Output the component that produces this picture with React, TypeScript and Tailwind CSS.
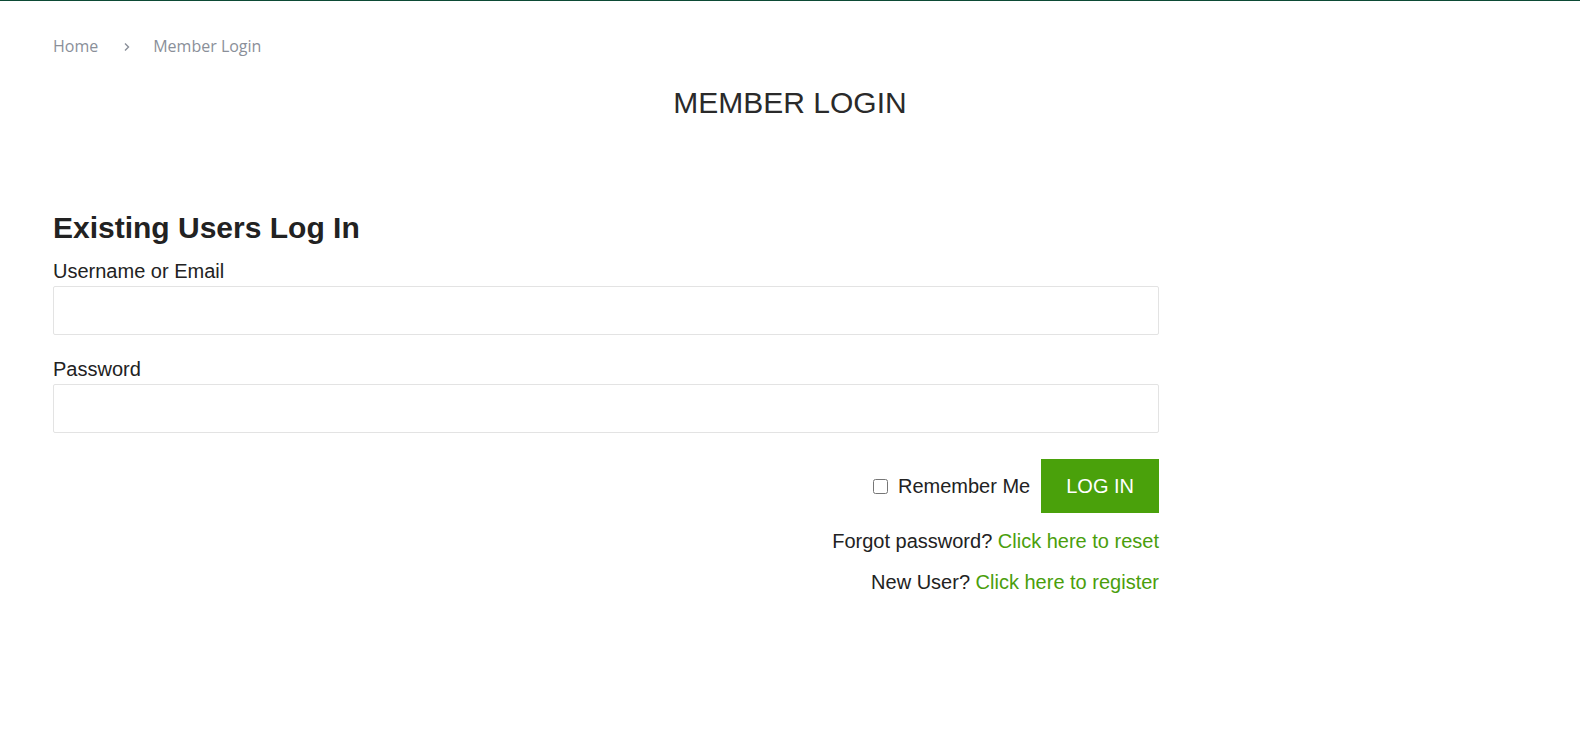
import { useState } from "react";

const ARIAL = "font-['Arial','Liberation_Sans',sans-serif]";

function Breadcrumb() {
  return (
    <nav className="flex items-center pl-[53px] pt-[33px] font-['Open_Sans',sans-serif] text-[16px] leading-6 text-[#8a8f99]">
      <a href="#" className="hover:text-[#4aa00b]">
        Home
      </a>
      {/* small chevron separator */}
      <svg
        aria-hidden
        width="8"
        height="10"
        viewBox="0 0 8 10"
        className="ml-[25px] mr-[22px] mt-[1px]"
        fill="none"
        stroke="currentColor"
        strokeWidth="1.4"
      >
        <path d="M2 1.5 5.5 5 2 8.5" />
      </svg>
      <span>Member Login</span>
    </nav>
  );
}

function Field({ label, type }: { label: string; type: string }) {
  return (
    <label className="block">
      <span className="block text-[20px] leading-6 text-[#222]">{label}</span>
      <input
        type={type}
        className="mt-[3px] block h-[49px] w-full rounded-[2px] border border-[#e3e3e3] bg-white px-3 text-[18px] outline-none focus:border-[#4aa00b]"
      />
    </label>
  );
}

export default function App() {
  const [remember, setRemember] = useState(false);

  return (
    <div className={`min-h-screen border-t border-[#0c4a35] bg-white ${ARIAL}`}>
      <Breadcrumb />

      <h1 className="mt-[27px] text-center text-[30px] leading-9 font-normal text-[#2a2a2a]">
        MEMBER LOGIN
      </h1>

      <form
        className="ml-[53px] mt-[89px] w-[1106px]"
        onSubmit={(e) => e.preventDefault()}
      >
        <h2 className="text-[30px] leading-9 font-bold text-[#222]">
          Existing Users Log In
        </h2>

        <div className="mt-[13px]">
          <Field label="Username or Email" type="text" />
        </div>
        <div className="mt-[22px]">
          <Field label="Password" type="password" />
        </div>

        <div className="mt-[26px] flex items-center justify-end">
          <label className="flex items-center gap-[10px] text-[20px] leading-6 text-[#222]">
            <input
              type="checkbox"
              checked={remember}
              onChange={(e) => setRemember(e.target.checked)}
              className="size-[15px] accent-[#4aa00b]"
            />
            Remember Me
          </label>
          <button
            type="submit"
            className="ml-[11px] h-[54px] bg-[#4aa10b] px-[25px] text-[20px] text-white hover:bg-[#3f8b09]"
          >
            LOG IN
          </button>
        </div>

        <p className="mt-[16px] text-right text-[20px] leading-6 text-[#222]">
          Forgot password?{" "}
          <a href="#" className="text-[#4a9e0c] hover:underline">
            Click here to reset
          </a>
        </p>
        <p className="mt-[17px] text-right text-[20px] leading-6 text-[#222]">
          New User?{" "}
          <a href="#" className="text-[#4a9e0c] hover:underline">
            Click here to register
          </a>
        </p>
      </form>
    </div>
  );
}
